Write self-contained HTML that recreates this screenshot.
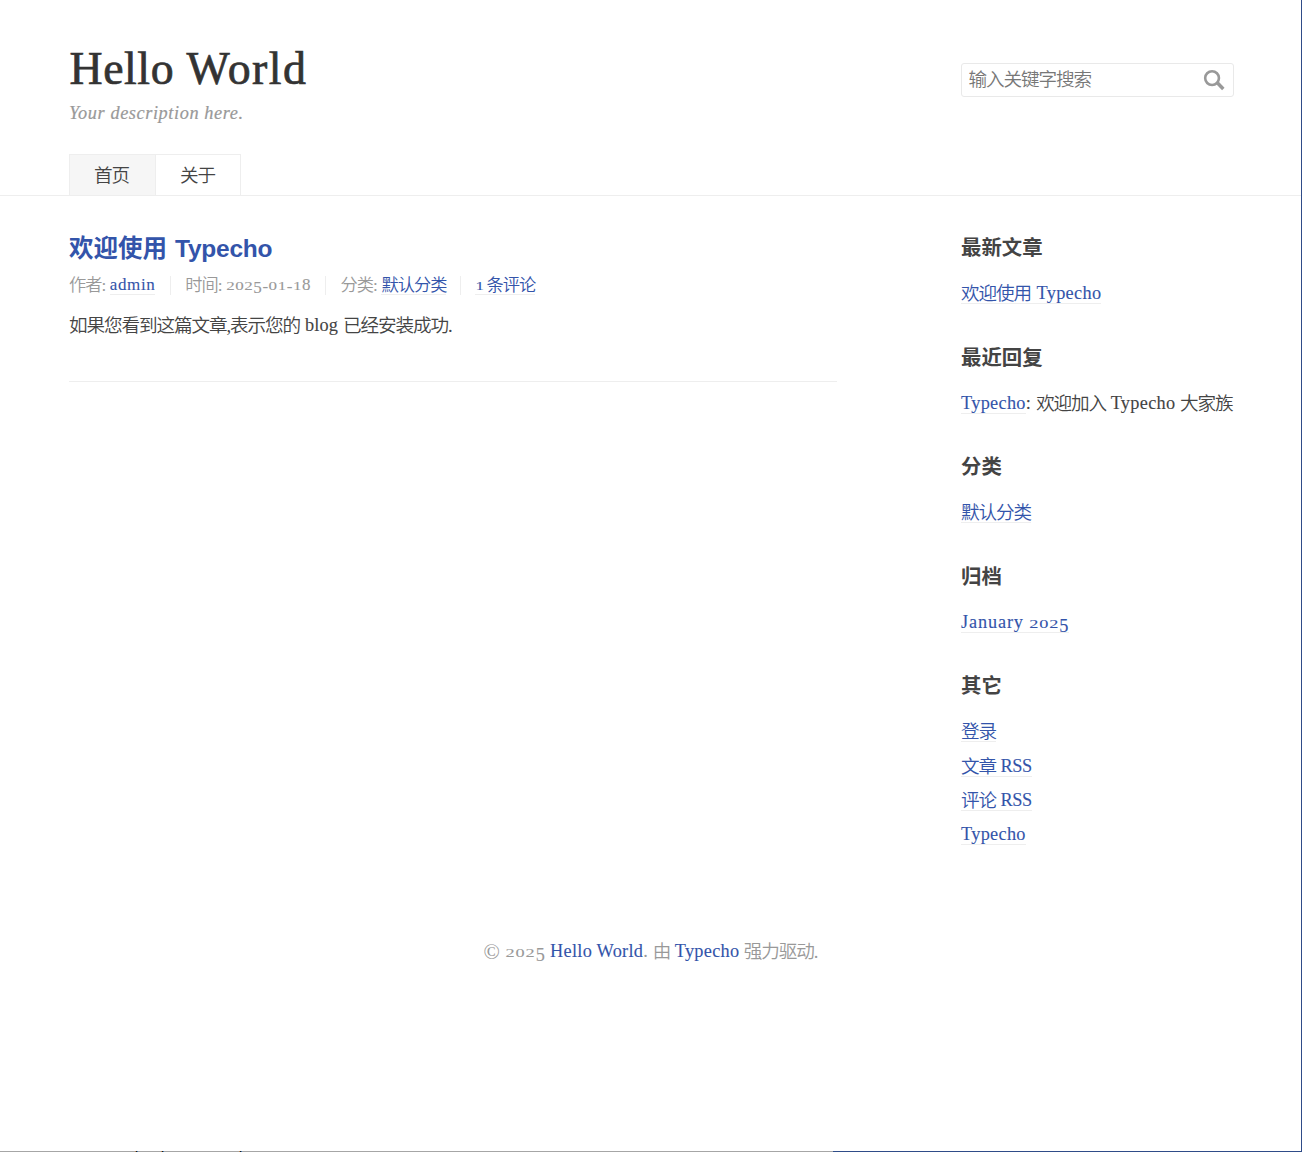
<!DOCTYPE html>
<html lang="zh-CN">
<head>
<meta charset="utf-8">
<title>Hello World</title>
<style>
html,body{margin:0;padding:0;}
html{background:#fff;}
body{
  position:relative;width:1302px;height:1152px;overflow:hidden;background:#fff;color:#444;
  font-family:"Liberation Serif","Noto Sans CJK SC",serif;font-size:18.6px;letter-spacing:-1.1px;word-spacing:.8px;line-height:1.2;font-weight:350;
}
a{color:#3354AA;text-decoration:none;}
.abs{position:absolute;white-space:nowrap;}
.cjk{font-family:"Noto Sans CJK SC","Liberation Serif",sans-serif;}
.en{position:relative;top:-1px;font-family:"Liberation Serif",serif;font-size:18.3px;letter-spacing:.7px;word-spacing:0;-webkit-text-stroke:.1px currentColor;}
.lnk{background:linear-gradient(#EEE,#EEE) no-repeat left bottom/100% 1px;}
.o{display:inline-block;line-height:1;transform:scaleY(.71);transform-origin:50% 83.75%;}
.d{position:relative;top:.2em;}
.h{position:relative;top:1.5px;}

/* header */
#logo{left:69.6px;top:42px;font-size:45.8px;line-height:54px;color:#333;letter-spacing:1.05px;word-spacing:0;-webkit-text-stroke:.7px #333;}
#logo a{color:#333;}
#desc{left:69px;top:101px;font-size:18.3px;line-height:24px;color:#999;font-style:italic;letter-spacing:.59px;word-spacing:0;-webkit-text-stroke:.2px #999;}
#hline{position:absolute;left:0;top:195px;width:1301px;height:1px;background:#EEE;}
#nav{position:absolute;left:69px;top:154px;height:41px;}
#nav a{position:absolute;top:0;box-sizing:border-box;width:87px;height:41px;border:1px solid #EEE;border-bottom:none;
  color:#444;text-align:center;line-height:38px;}
#nav a.current{background:#F6F6F6;}

/* search */
#search{position:absolute;left:961px;top:63px;width:273px;height:34px;box-sizing:border-box;border:1px solid #E9E9E9;border-radius:3px;background:#fff;}
#search span{position:absolute;left:6.5px;top:0;line-height:28px;color:#777;}
#search svg{position:absolute;left:240px;top:5px;}

/* post */
#ptitle{left:69px;top:232px;font-family:"Liberation Sans","Noto Sans CJK SC",sans-serif;font-weight:bold;font-size:24.5px;line-height:34px;letter-spacing:0;word-spacing:0;}
#meta{left:69px;top:275px;font-size:17.25px;letter-spacing:-1px;word-spacing:1.2px;line-height:22px;color:#999;}
#meta .en{font-size:17px;letter-spacing:.6px;}
#meta span.sep{display:inline-block;width:1px;height:19px;background:#EEE;vertical-align:middle;position:relative;top:-2px;margin:0 14px 0 14px;}
#pcontent{left:69px;top:313px;line-height:26px;word-spacing:1.5px;}
#pline{position:absolute;left:69px;top:381px;width:768px;height:1px;background:#EEE;}

/* sidebar */
.wt{left:961px;font-family:"Liberation Sans","Noto Sans CJK SC",sans-serif;font-weight:bold;font-size:20.4px;line-height:28px;color:#444;letter-spacing:0;word-spacing:0;}
.wi{left:961px;line-height:28px;word-spacing:1px;}

/* footer */
#footer{left:483.5px;top:939px;color:#999;line-height:26px;}

/* edges */
#eR{position:absolute;left:1301px;top:0;width:1px;height:1152px;background:#2f4c88;}
#eB1{position:absolute;left:0;top:1151px;width:833px;height:1px;background:#a6a6a6;}
#eB2{position:absolute;left:833px;top:1151px;width:469px;height:1px;background:#2f4c88;}
.tick{position:absolute;top:1151px;width:3px;height:1px;background:linear-gradient(90deg,#b5814f 0 1px,#1c1c1c 1px 2px,#3a72ac 2px 3px);}
</style>
</head>
<body>
<div id="logo" class="abs"><a href="#" id="r_logo"><span style="letter-spacing:.55px">Hello</span> <span style="letter-spacing:1.5px">World</span></a></div>
<div id="desc" class="abs"><span id="r_desc">Your description here.</span></div>

<div id="search"><span class="cjk" id="r_ph">输入关键字搜索</span>
<svg width="26" height="24" viewBox="0 0 26 24"><circle cx="10.05" cy="9.1" r="6.9" fill="none" stroke="#999" stroke-width="2.6"/><line x1="14.6" y1="13.1" x2="21.3" y2="19.9" stroke="#999" stroke-width="3.5" stroke-linecap="butt"/></svg>
</div>

<div id="nav">
  <a class="current cjk" href="#" style="left:0"><span id="r_nav1" style="position:relative;left:-1px">首页</span></a>
  <a class="cjk" href="#" style="left:86px;width:86px"><span id="r_nav2" style="position:relative;left:-.5px">关于</span></a>
</div>
<div id="hline"></div>

<div id="ptitle" class="abs"><a href="#"><span id="r_t1">欢迎使用</span><span style="letter-spacing:1.2px"> </span><span id="r_t2" style="letter-spacing:-.25px">Typecho</span></a></div>
<div id="meta" class="abs"><span id="r_m1">作者:</span> <a class="lnk" href="#"><span class="en" id="r_m2">admin</span></a><span class="sep" style="margin-left:15px"></span><span id="r_m3">时间:</span> <span class="en" id="r_m4" style="letter-spacing:.55px"><span class="o">2</span><span class="o">0</span><span class="o">2</span><span class="d">5</span><span class="h">-</span><span class="o">0</span><span class="o">1</span><span class="h">-</span><span class="o">1</span>8</span><span class="sep" style="margin-right:14.5px"></span><span id="r_m5">分类:</span> <a class="lnk" href="#" id="r_m6">默认分类</a><span class="sep"></span><a class="lnk" href="#" id="r_m7" style="word-spacing:0"><span class="en" style="letter-spacing:-.6px"><span class="o">1</span></span> 条评论</a></div>
<div id="pcontent" class="abs"><span id="r_c1">如果您看到这篇文章,表示您的</span> <span class="en" id="r_c2" style="letter-spacing:.1px">blog</span> <span id="r_c3">已经安装成功.</span></div>
<div id="pline"></div>

<div class="abs wt" style="top:234px"><span id="r_w1">最新文章</span></div>
<div class="abs wi" style="top:280px;word-spacing:2px"><a class="lnk" href="#"><span id="r_s1">欢迎使用</span> <span class="en" id="r_s2" style="letter-spacing:.3px">Typecho</span></a></div>

<div class="abs wt" style="top:344px"><span id="r_w2">最近回复</span></div>
<div class="abs wi" style="top:390px"><a class="lnk" href="#"><span class="en" id="r_s3" style="letter-spacing:.3px">Typecho</span></a><span class="en">:</span> <span id="r_s4">欢迎加入</span> <span class="en" id="r_s5" style="letter-spacing:.3px">Typecho</span> <span id="r_s6">大家族</span></div>

<div class="abs wt" style="top:453px"><span id="r_w3">分类</span></div>
<div class="abs wi" style="top:499px"><a class="lnk" href="#" id="r_s7">默认分类</a></div>

<div class="abs wt" style="top:563px"><span id="r_w4">归档</span></div>
<div class="abs wi" style="top:609px"><a class="lnk" href="#"><span class="en" id="r_s8" style="letter-spacing:.86px">January <span class="o">2</span><span class="o">0</span><span class="o">2</span><span class="d">5</span></span></a></div>

<div class="abs wt" style="top:672px"><span id="r_w5">其它</span></div>
<div class="abs wi" style="top:718px"><a class="lnk" href="#" id="r_s9">登录</a></div>
<div class="abs wi" style="top:753px"><a class="lnk" href="#"><span id="r_s10">文章</span> <span class="en" id="r_s11" style="letter-spacing:-.4px">RSS</span></a></div>
<div class="abs wi" style="top:787px"><a class="lnk" href="#"><span id="r_s12">评论</span> <span class="en" id="r_s13" style="letter-spacing:-.4px">RSS</span></a></div>
<div class="abs wi" style="top:821px"><a class="lnk" href="#"><span class="en" id="r_s14" style="letter-spacing:.3px">Typecho</span></a></div>

<div id="footer" class="abs"><span class="en" id="r_f1" style="letter-spacing:.95px"><span style="font-size:21.5px;line-height:1;vertical-align:-1.5px;letter-spacing:0;-webkit-text-stroke:0">&copy;</span> <span class="o">2</span><span class="o">0</span><span class="o">2</span><span class="d">5</span></span> <a href="#"><span class="en" id="r_f2" style="letter-spacing:.27px">Hello World</span></a><span class="en">.</span> <span id="r_f3">由</span> <a href="#"><span class="en" id="r_f4" style="letter-spacing:.3px">Typecho</span></a> <span id="r_f5">强力驱动.</span></div>

<div id="eR"></div><div id="eB1"></div><div id="eB2"></div>
<div class="tick" style="left:135px"></div><div class="tick" style="left:161px"></div><div class="tick" style="left:239px"></div>
</body>
</html>
